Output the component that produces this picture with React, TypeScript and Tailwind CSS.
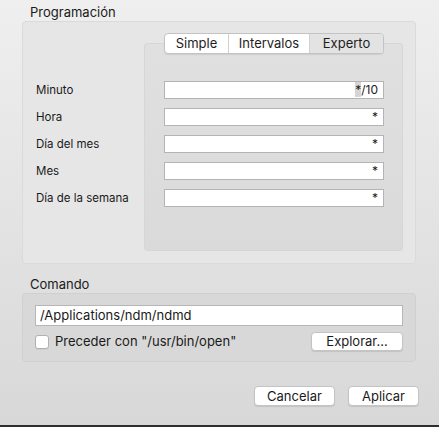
const fields = [
  { label: 'Minuto', value: '*/10', selected: true },
  { label: 'Hora', value: '*' },
  { label: 'Día del mes', value: '*' },
  { label: 'Mes', value: '*' },
  { label: 'Día de la semana', value: '*' },
]

const font = { fontFamily: 'Inter, "Liberation Sans", sans-serif' }

function Tabs() {
  const tabs = ['Simple', 'Intervalos', 'Experto']
  return (
    <div className="flex h-[21px] -mt-[11px] ml-[19px] w-[220px] rounded-[4px] border border-[#c3c3c3] bg-white text-[13px] leading-[19px] text-[#1e1e1e] shadow-[0_1px_1px_rgba(0,0,0,0.08)] overflow-hidden">
      {tabs.map((t, i) => (
        <div
          key={t}
          className={
            'flex items-center justify-center ' +
            (i === 0 ? 'w-[64px] border-r border-[#d0d0d0]' : i === 1 ? 'w-[81px] border-r border-[#d0d0d0]' : 'flex-1 bg-[#e3e3e3]')
          }
        >
          {t}
        </div>
      ))}
    </div>
  )
}

export default function App() {
  return (
    <div className="w-[439px] h-[427px] flex flex-col bg-gradient-to-b from-[#efefef] to-[#d8d8d8] text-[#1a1a1a]" style={font}>
      <div className="flex-1 flex flex-col pt-[4px] pl-[22px] pr-[23px]">
        {/* Programación */}
        <div className="pl-[8px] text-[13px] leading-[17px]">Programación</div>
        <div className="flex h-[243px] rounded-[4px] border border-[#dadada] bg-[#e6e6e6]">
          <div className="w-[121px] pt-[59px] pl-[13px] flex flex-col text-[11.5px]">
            {fields.map((f) => (
              <div key={f.label} className="h-[27px] leading-[18px]">
                {f.label}
              </div>
            ))}
          </div>
          <div className="mt-[21px] mb-[12px] w-[259px] flex flex-col rounded-[3px] border border-[#d6d6d6] bg-gradient-to-b from-[#e0e0e0] to-[#dadada]">
            <Tabs />
            <div className="mt-[27px] pl-[19px] flex flex-col">
              {fields.map((f) => (
                <div key={f.label} className="h-[27px]">
                  <div className="w-[220px] h-[18px] flex items-center justify-end pr-[5px] bg-white border border-[#b4b4b4] text-[12px] leading-[16px]">
                    {f.selected ? (
                      <span>
                        <span className="bg-[#d5d5d5]">*</span>/10
                      </span>
                    ) : (
                      <span>{f.value}</span>
                    )}
                  </div>
                </div>
              ))}
            </div>
          </div>
        </div>

        {/* Comando */}
        <div className="pl-[8px] mt-[12px] text-[13px] leading-[17px]">Comando</div>
        <div className="h-[69px] rounded-[4px] border border-[#d0d0d0] bg-[#d8d8d8] pt-[11px] pl-[12px] pr-[12px]">
          <div className="h-[21px] flex items-center pl-[4px] bg-white border border-[#b6b6b6] text-[13px]">/Applications/ndm/ndmd</div>
          <div className="mt-[6px] flex items-center">
            <div className="w-[14px] h-[14px] rounded-[3px] bg-white border border-[#b0b0b0] shadow-[0_1px_0_rgba(0,0,0,0.05)]" />
            <span className="ml-[6px] text-[13px]">Preceder con "/usr/bin/open"</span>
            <button className="ml-auto w-[92px] h-[19px] rounded-[4px] bg-white border border-[#c4c4c4] shadow-[0_1px_1px_rgba(0,0,0,0.1)] text-[13px] leading-[17px]">
              Explorar...
            </button>
          </div>
        </div>

        {/* Buttons */}
        <div className="mt-[24px] -mr-[3px] flex justify-end gap-[13px]">
          <button className="w-[81px] h-[20px] rounded-[4px] bg-white border border-[#c4c4c4] shadow-[0_1px_1px_rgba(0,0,0,0.1)] text-[13px] leading-[18px]">
            Cancelar
          </button>
          <button className="w-[71px] h-[20px] rounded-[4px] bg-white border border-[#c4c4c4] shadow-[0_1px_1px_rgba(0,0,0,0.1)] text-[13px] leading-[18px]">
            Aplicar
          </button>
        </div>
      </div>
      <div className="h-[2px] bg-[#2e2e2e]" />
    </div>
  )
}
